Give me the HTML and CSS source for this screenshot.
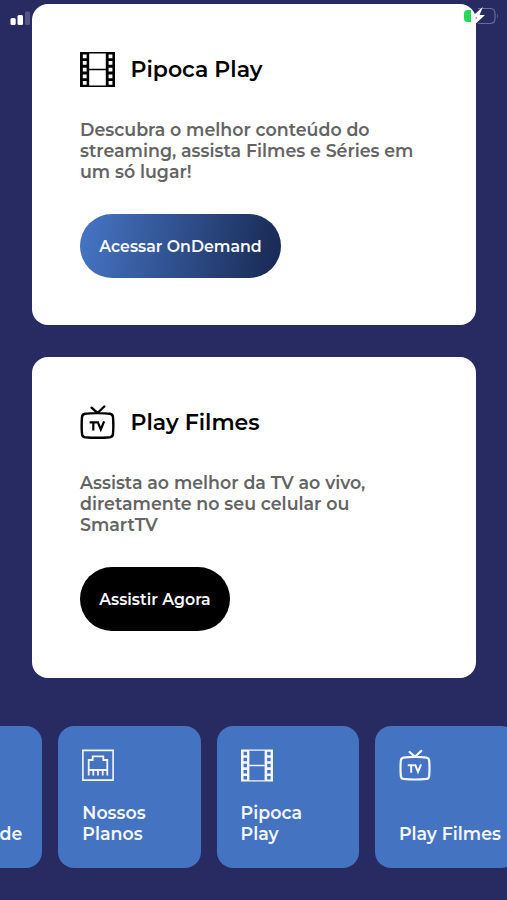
FILE: index.html
```html
<!DOCTYPE html>
<html lang="pt-BR">
<head>
<meta charset="utf-8">
<meta name="viewport" content="width=device-width, initial-scale=1">
<title>Pipoca Play</title>
<link rel="stylesheet" href="styles.css">
</head>
<body>
<svg class="defs" aria-hidden="true">
  <symbol id="film" viewBox="0 0 35 35">
    <path fill="currentColor" fill-rule="evenodd" d="M0 0h9.2v35H0zM2.800 2.400v3.800h3.800v-3.800zM2.800 9v3.800h3.800v-3.800zM2.800 15.700v3.800h3.800v-3.800zM2.800 22.400v3.800h3.800v-3.800zM2.800 29v3.800h3.800v-3.800zM25.800 0h9.200v35h-9.200zM28.600 2.400v3.800h3.800v-3.800zM28.600 9v3.800h3.800v-3.800zM28.600 15.700v3.800h3.800v-3.800zM28.600 22.400v3.800h3.800v-3.800zM28.600 29v3.800h3.800v-3.800z"/>
    <path fill="none" stroke="currentColor" stroke-width="1.4" d="M9 .7h17M9 17.500h17M9 34.300h17"/>
  </symbol>
  <symbol id="tv" viewBox="0 0 35 35">
    <path fill="none" stroke="currentColor" stroke-width="2.4" stroke-linecap="round" stroke-linejoin="round" d="M17.500 8.100Q26 8.100 30 8.800Q32.600 9.200 33 12Q33.700 20.500 33 29Q32.700 31.800 30 32.200Q17.500 33.400 5 32.200Q2.300 31.800 2 29Q1.300 20.500 2 12Q2.400 9.200 5 8.800Q9 8.100 17.500 8.100M11.600 2.700L17.500 8L24.300 1.500"/>
    <path fill="none" stroke="currentColor" stroke-width="2.200" d="M9.600 17.300h7.400M13.300 17v8.500M17.500 16.300l3.300 8.200l3.300-8.200"/>
  </symbol>
  <symbol id="port" viewBox="0 0 32 32">
    <path fill="none" stroke="currentColor" stroke-width="1.600" d="M.900.900h30.200v29.700H.900z"/>
    <path fill="none" stroke="currentColor" stroke-width="1.800" d="M6.700 25.900V10.500h4V6.800h10.600v3.700h4v15.400M6.700 20.500h18.600M11.300 20.500v5.400M16 20.500v5.400M20.700 20.500v5.400"/>
  </symbol>
</svg>

<main class="page">
  <section class="card">
    <header class="card-head">
      <svg class="icon"><use href="#film"/></svg>
      <h2 class="title">Pipoca Play</h2>
    </header>
    <p class="copy">Descubra o melhor conteúdo do<br>streaming, assista Filmes e Séries em<br>um só lugar!</p>
    <a class="button button-blue">Acessar OnDemand</a>
  </section>

  <section class="card">
    <header class="card-head">
      <svg class="icon"><use href="#tv"/></svg>
      <h2 class="title">Play Filmes</h2>
    </header>
    <p class="copy">Assista ao melhor da TV ao vivo,<br>diretamente no seu celular ou<br>SmartTV</p>
    <a class="button button-black">Assistir Agora</a>
  </section>

  <nav class="tiles">
    <a class="tile tile-first"><span>de</span></a>
    <a class="tile"><svg class="tile-icon"><use href="#port"/></svg><span>Nossos<br>Planos</span></a>
    <a class="tile"><svg class="tile-icon"><use href="#film"/></svg><span>Pipoca<br>Play</span></a>
    <a class="tile"><svg class="tile-icon"><use href="#tv"/></svg><span>Play Filmes</span></a>
  </nav>
</main>

<div class="status">
  <svg class="signal" viewBox="0 0 30 16">
    <rect x="0.500" y="8" width="5.200" height="7" rx="1.500" fill="#fff"/>
    <rect x="7.500" y="5" width="5.500" height="10" rx="1.500" fill="#fff"/>
    <rect x="15" y="1.500" width="5" height="13.500" rx="1.500" fill="#55558a"/>
  </svg>
  <svg class="battery" viewBox="0 0 40 20">
    <path d="M14 2.500h12q5 0 5 5v5q0 5-5 5H14" fill="none" stroke="#696b9b" stroke-width="1.200"/>
    <path d="M33 7.300q1.600 2.700 0 5.400z" fill="#696b9b"/>
    <path d="M3.500 4H7v12H3.500Q0 16 0 12V8Q0 4 3.500 4z" fill="#25d657"/>
    <path d="M18.800 1L7.300 11.200h5.500L9.700 19.500L21 8.900h-5.400z" fill="#fff"/>
  </svg>
</div>
</body>
</html>
```

FILE: styles.css
```css
* { box-sizing: border-box; }

body {
  margin: 0;
  height: 900px;
  overflow: hidden;
  background: #282a62;
  font-family: Montserrat, Inter, "Open Sans", sans-serif;
  position: relative;
}

.defs { position: absolute; width: 0; height: 0; }

.page {
  display: flex;
  flex-direction: column;
  gap: 32px;
  padding: 4px 31px 0 32px;
}

.card {
  height: 321px;
  padding: 47px 48px 0;
  border-radius: 16px;
  background: #fff;
}

.card-head {
  display: flex;
  align-items: center;
  gap: 15.5px;
  height: 36px;
}

.icon { width: 35px; height: 35px; flex: none; }

.title {
  margin: 0;
  padding-top: 2px;
  font-size: 22px;
  line-height: 28px;
  font-weight: 600;
  color: #000;
}

.copy {
  margin: 32px 0 0;
  font-size: 17.42px;
  line-height: 21.2px;
  font-weight: 600;
  white-space: nowrap;
  color: #646464;
}

.button {
  display: flex;
  align-items: center;
  justify-content: center;
  height: 64px;
  margin-top: 31px;
  padding-top: 1px;
  border-radius: 32px;
  font-size: 15.8px;
  font-weight: 600;
  white-space: nowrap;
  color: #f8f9fc;
}

.button-blue {
  width: 201px;
  background: linear-gradient(100deg, #4472c0 5%, #1a2c57 95%);
}

.button-black { width: 150px; background: #000; }

.tiles {
  display: flex;
  gap: 16px;
  margin: 16px -32px 0 -132px;
}

.tile {
  display: flex;
  flex-direction: column;
  justify-content: space-between;
  flex: none;
  width: 142.3px;
  height: 142px;
  padding: 23px 0 24px 24px;
  border-radius: 16px;
  background: #4473c1;
  font-size: 17.4px;
  line-height: 21px;
  font-weight: 600;
  white-space: nowrap;
  color: #f4f6fb;
}

.tile-first {
  justify-content: flex-end;
  align-items: flex-end;
  padding-right: 20px;
}

.tile-icon { width: 32px; height: 33px; }

.status {
  position: absolute;
  inset: 0 0 auto;
  height: 32px;
}

.signal {
  position: absolute;
  left: 10px;
  top: 10px;
  width: 30px;
  height: 16px;
}

.battery {
  position: absolute;
  left: 464px;
  top: 6px;
  width: 40px;
  height: 20px;
}
```
